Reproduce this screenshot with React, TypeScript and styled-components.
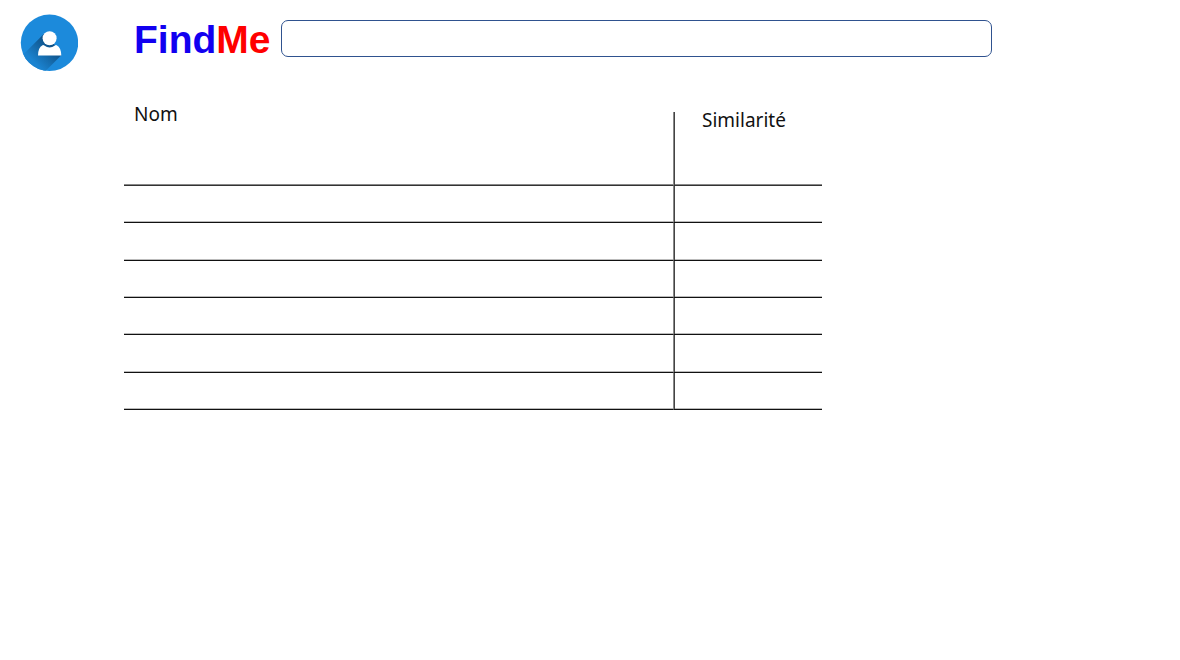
import React from 'react';
import styled, { createGlobalStyle } from 'styled-components';

const GlobalStyle = createGlobalStyle`
  *, *::before, *::after { box-sizing: border-box; }
  body { margin: 0; background: #fff; color: #111; font-family: "Noto Sans", sans-serif; }
`;

const Header = styled.header`
  display: flex;
  align-items: flex-start;
  padding: 14px 20px 0;
`;

const ProfileButton = styled.button`
  flex: none;
  width: 58px;
  height: 58px;
  padding: 0;
  border: 0;
  border-radius: 50%;
  background: none;
  cursor: pointer;

  svg { display: block; }
`;

const SearchForm = styled.form`
  display: flex;
  flex: 1;
  align-items: flex-start;
  gap: 10px;
  margin: 6px 0 0 56px;
`;

const Brand = styled.a`
  font: bold 39px/40px "Liberation Sans", Arial, sans-serif;
  color: #1200f0;
  text-decoration: none;
`;

const BrandAccent = styled.span`
  color: #ff0000;
`;

const SearchInput = styled.input`
  flex: 1;
  min-width: 0;
  max-width: 711px;
  height: 37px;
  padding: 0 12px;
  border: 1px solid #2f528f;
  border-radius: 7px;
  background: #fff;
  font: 18px/24px "Noto Sans", sans-serif;
`;

const Main = styled.main`
  padding: 40px 20px 0 124px;
`;

const ResultsTable = styled.table`
  width: 100%;
  max-width: 698px;
  table-layout: fixed;
  border-spacing: 0;
`;

const HeadCell = styled.th<{ $similarity?: boolean }>`
  width: ${(p) => (p.$similarity ? '149px' : 'auto')};
  height: 74px;
  padding: ${(p) => (p.$similarity ? '0 0 0 28px' : '0 0 0 10px')};
  border-bottom: 1px solid #333;
  border-left: ${(p) => (p.$similarity ? '1px solid #888' : '0')};
  box-shadow: ${(p) => (p.$similarity ? 'inset 1px 0 #444, ' : '')}inset 0 -1px #888;
  font-size: 19px;
  font-weight: 400;
  line-height: ${(p) => (p.$similarity ? '16px' : '4px')};
  text-align: left;
  vertical-align: top;
`;

const Row = styled.tr`
  height: 37px;

  &:nth-child(3n + 2) { height: 38px; }
`;

const Cell = styled.td<{ $similarity?: boolean }>`
  padding: 0;
  border-bottom: 1px solid #111;
  border-left: ${(p) => (p.$similarity ? '1px solid #888' : '0')};
  box-shadow: ${(p) => (p.$similarity ? 'inset 1px 0 #444, ' : '')}inset 0 -1px #bbb;
`;

const ProfileIcon = () => (
  <svg width="58" height="58" viewBox="0 0 58 58" aria-hidden="true">
    <defs>
      <clipPath id="disc">
        <ellipse cx="29.5" cy="28.8" rx="28.7" ry="28.3" />
      </clipPath>
      <linearGradient id="shade" gradientUnits="userSpaceOnUse" x1="32" y1="32" x2="15" y2="49">
        <stop offset="0" stopColor="#0f5288" />
        <stop offset="1" stopColor="#1b83d0" />
      </linearGradient>
    </defs>
    <ellipse cx="29.5" cy="28.8" rx="28.7" ry="28.3" fill="#1c8adb" />
    <path clipPath="url(#disc)" fill="url(#shade)" d="M24.5 19.2L-3 46.7L13.6 69L41.3 41.3L30 24Z" />
    <circle cx="29.6" cy="24.2" r="7" fill="#fff" />
    <path
      fill="#fff"
      d="M18 41.5c0-5 1.5-8.500 4.500-10.200q1-.5 1.800.2q5.300 4 10.600 0q.8-.7 1.800-.2c3 1.700 4.600 5.200 4.600 10.200z"
    />
  </svg>
);

const ROWS = [1, 2, 3, 4, 5, 6];

export default function App() {
  return (
    <>
      <GlobalStyle />
      <Header>
        <ProfileButton type="button" aria-label="Profil">
          <ProfileIcon />
        </ProfileButton>
        <SearchForm role="search" onSubmit={(e) => e.preventDefault()}>
          <Brand href="#">
            Find<BrandAccent>Me</BrandAccent>
          </Brand>
          <SearchInput type="search" aria-label="Rechercher" />
        </SearchForm>
      </Header>
      <Main>
        <ResultsTable>
          <thead>
            <tr>
              <HeadCell scope="col">Nom</HeadCell>
              <HeadCell scope="col" $similarity>Similarité</HeadCell>
            </tr>
          </thead>
          <tbody>
            {ROWS.map((row) => (
              <Row key={row}>
                <Cell />
                <Cell $similarity />
              </Row>
            ))}
          </tbody>
        </ResultsTable>
      </Main>
    </>
  );
}
